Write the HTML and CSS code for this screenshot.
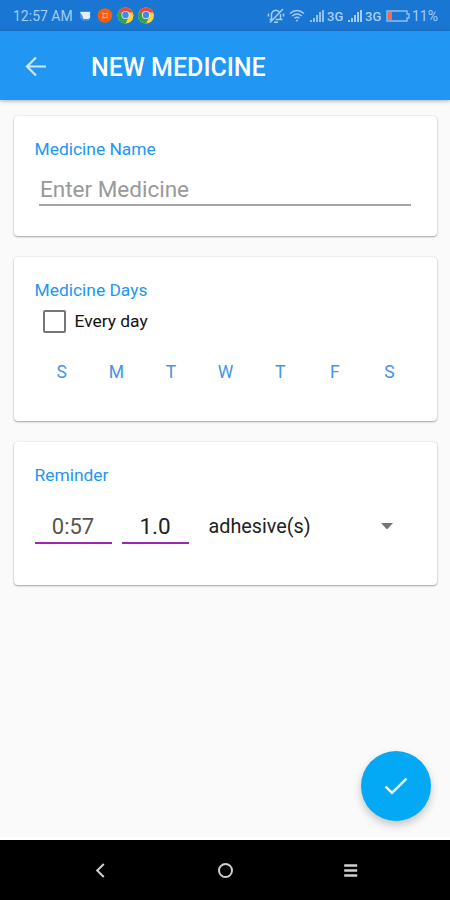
FILE: index.html
```html
<!DOCTYPE html>
<html lang="en">
<head>
<meta charset="utf-8">
<title>New Medicine</title>
<link rel="stylesheet" href="styles.css">
</head>
<body>
<header class="status">
  <span class="clock">12:57 AM</span>
  <svg class="notices" width="76" height="18" viewBox="0 0 76 18">
    <path d="M1 4h10.500v8l-2 1.800H3.500L1 11z" fill="#3f8ff5"/>
    <path d="M1 5h10v5.500L9.500 12H4.500L3.500 9z" fill="#e3effd"/>
    <circle cx="26" cy="8.500" r="7.300" fill="#f45d13"/>
    <path d="M24 5.500v6M28 5.500v6M23 6.500h6M23 10.500h6" stroke="#ffa56c" stroke-width="1" fill="none"/>
    <g id="chrome">
      <circle cx="46.500" cy="8.500" r="8" fill="#ffd23f"/>
      <path d="M39.600 4.500A8 8 0 0 0 46.500 16.500L49.500 10.500 46.500 8.500z" fill="#2fa552"/>
      <path d="M39.600 4.500A8 8 0 0 1 54 5.500H46.500v3z" fill="#e84a3c"/>
      <circle cx="46.500" cy="8" r="4" fill="#e6efff"/>
      <circle cx="46.500" cy="8" r="3.200" fill="#4487e8"/>
    </g>
    <use href="#chrome" x="20.500"/>
  </svg>
  <svg class="mute" width="18" height="18" viewBox="0 0 18 18" fill="none" stroke="#a5cdf5" stroke-width="1.500">
    <path d="M4.500 12V7a4.300 4.300 0 0 1 8-1.500M13.500 7v5M2.500 12.500h4M8.500 12.500h7M7 15.300h4M16 2L3 15.500M1.500 6.500v3M16.500 6.500v3"/>
  </svg>
  <svg class="wifi" width="16" height="14" viewBox="0 0 16 14" fill="none" stroke="#a5cdf5" stroke-width="1.400">
    <path d="M1 4.500Q8 -1.500 15 4.500M3.200 7Q8 2.800 12.800 7M5.500 9.300Q8 7 10.500 9.300"/><circle cx="8" cy="11.500" r="1" fill="#a5cdf5" stroke="none"/>
  </svg>
  <svg class="signal" width="14" height="12" viewBox="0 0 14 12" fill="#91c1f2"><path d="M0 10h2v2H0zM3 8h2v4H3zM6 5h2v7H6zM9 2h2v10H9zM12 0h2v12h-2z"/></svg>
  <span class="net">3G</span>
  <svg class="signal" width="14" height="12" viewBox="0 0 14 12" fill="#a5cdf5"><path d="M0 10h2v2H0zM3 8h2v4H3zM6 5h2v7H6zM9 2h2v10H9zM12 0h2v12h-2z"/></svg>
  <span class="net">3G</span>
  <svg class="battery" width="24" height="12" viewBox="0 0 24 12"><path d="M1 1h20v3h2v4h-2v3H1z" fill="none" stroke="#8fbff0" stroke-width="1.400"/><path d="M2 2h4v8H2z" fill="#e8705f"/></svg>
  <span class="percent">11%</span>
</header>
<div class="appbar">
  <svg class="back" width="22" height="22" viewBox="0 0 22 22" fill="none" stroke="#cfe7fd" stroke-width="2.200"><path d="M21 10.500H2.500M11 1.500L2 10.500l9 9"/></svg>
  <h1 class="title">NEW MEDICINE</h1>
</div>
<main class="content">
  <section class="card card-name">
    <h2 class="label">Medicine Name</h2>
    <div class="field">Enter Medicine</div>
  </section>
  <section class="card card-days">
    <h2 class="label">Medicine Days</h2>
    <div class="check"><span class="box"></span><span class="check-text">Every day</span></div>
    <div class="days"><span>S</span><span>M</span><span>T</span><span>W</span><span>T</span><span>F</span><span>S</span></div>
  </section>
  <section class="card card-reminder">
    <h2 class="label">Reminder</h2>
    <div class="reminder">
      <span class="time">0:57</span>
      <span class="dose">1.0</span>
      <span class="unit">adhesive(s)</span>
      <svg class="caret" width="12" height="7" viewBox="0 0 12 7"><path d="M0 0h12L6 6.500z" fill="#757575"/></svg>
    </div>
  </section>
  <div class="fab"><svg width="24" height="18" viewBox="0 0 24 18" fill="none" stroke="#fff" stroke-width="2.400"><path d="M1.500 9.500l6.500 6.300L22.500 1.600"/></svg></div>
</main>
<nav class="nav">
  <svg width="20" height="20" viewBox="0 0 20 20" fill="none" stroke="#d0d0d0" stroke-width="2"><path d="M13.800 4L7.200 10.500l6.600 6.500"/></svg>
  <svg width="20" height="20" viewBox="0 0 20 20" fill="none" stroke="#d0d0d0" stroke-width="2"><circle cx="10.500" cy="10.500" r="6.500"/></svg>
  <svg width="20" height="20" viewBox="0 0 20 20" fill="none" stroke="#d0d0d0" stroke-width="2.500"><path d="M4.200 5.500h13M4.200 10.500h13M4.200 15.500h13"/></svg>
</nav>
</body>
</html>
```
FILE: styles.css
```css
* { box-sizing: border-box; }
body {
  margin: 0;
  width: 450px;
  height: 900px;
  display: flex;
  flex-direction: column;
  overflow: hidden;
  background: #fafafa;
  font-family: Roboto, "Liberation Sans", sans-serif;
}
h1, h2 { margin: 0; font-weight: 400; white-space: nowrap; }
svg { display: block; flex: none; }
.status {
  height: 31px;
  flex: none;
  display: flex;
  align-items: center;
  padding: 1px 0 0 13px;
  background: #1976d2;
  color: #a5cdf5;
}
.clock { flex: none; width: 66px; font-size: 14px; white-space: nowrap; }
.notices { margin-right: 112px; }
.mute { margin-right: 4px; }
.wifi { margin-right: 5px; }
.net { flex: none; width: 24px; padding-left: 3px; font-size: 13px; font-weight: 500; }
.battery { margin-right: 2px; }
.percent { font-size: 14px; }
.appbar {
  position: relative;
  height: 69px;
  flex: none;
  display: flex;
  align-items: center;
  padding: 2px 25px 0;
  background: #2196f3;
  box-shadow: 0 1px 4px rgba(0, 0, 0, .32);
}
.title { margin: 1px 0 0 44px; font-size: 25px; font-weight: 500; color: #fff; }
.content { position: relative; flex: 1; padding: 16px 13.500px 0 14px; border-bottom: 3px solid #fff; }
.card {
  border-radius: 4px;
  background: #fff;
  box-shadow: 0 1px 2px rgba(0, 0, 0, .32), 0 0 2px rgba(0, 0, 0, .12);
  padding: 22px 26px 0 20.500px;
}
.card-name { height: 120px; margin-bottom: 21px; }
.card-days { height: 164px; margin-bottom: 21px; }
.card-reminder { height: 143px; }
.label { font-size: 17.400px; line-height: 22px; color: #2196f3; }
.field { height: 45px; margin: 1px 0 0 4.500px; padding-left: 1px; border-bottom: 2px solid #a6a6a6; font-size: 22.500px; line-height: 56px; color: #999; }
.check { display: flex; align-items: center; height: 24px; margin: 8px 0 0 8px; }
.box { width: 23px; height: 23px; border: 2px solid #757575; border-radius: 2px; }
.check-text { margin-left: 9px; font-size: 17.400px; color: #111; }
.days { display: grid; grid-template-columns: repeat(7, 54.600px); margin-top: 28px; text-align: center; font-size: 17.500px; line-height: 22px; color: #4395e8; }
.reminder { display: flex; align-items: center; height: 36px; margin-top: 22px; color: #222; }
.time, .dose { flex: none; height: 36px; border-bottom: 2.500px solid #9c27b0; text-align: center; font-size: 22px; line-height: 37px; }
.time { width: 77px; color: #555; }
.dose { width: 67px; margin-left: 10px; font-size: 22.500px; }
.unit { flex: none; width: 172px; margin-left: 20px; font-size: 19.800px; }
.fab {
  position: absolute;
  right: 19.500px;
  bottom: 16.500px;
  width: 70px;
  height: 70px;
  display: flex;
  align-items: center;
  justify-content: center;
  border-radius: 50%;
  background: #03a9f4;
  box-shadow: 0 4px 8px rgba(0, 0, 0, .22);
}
.nav { height: 60px; flex: none; display: flex; align-items: center; justify-content: space-between; padding: 0 90px; background: #000; }
```
